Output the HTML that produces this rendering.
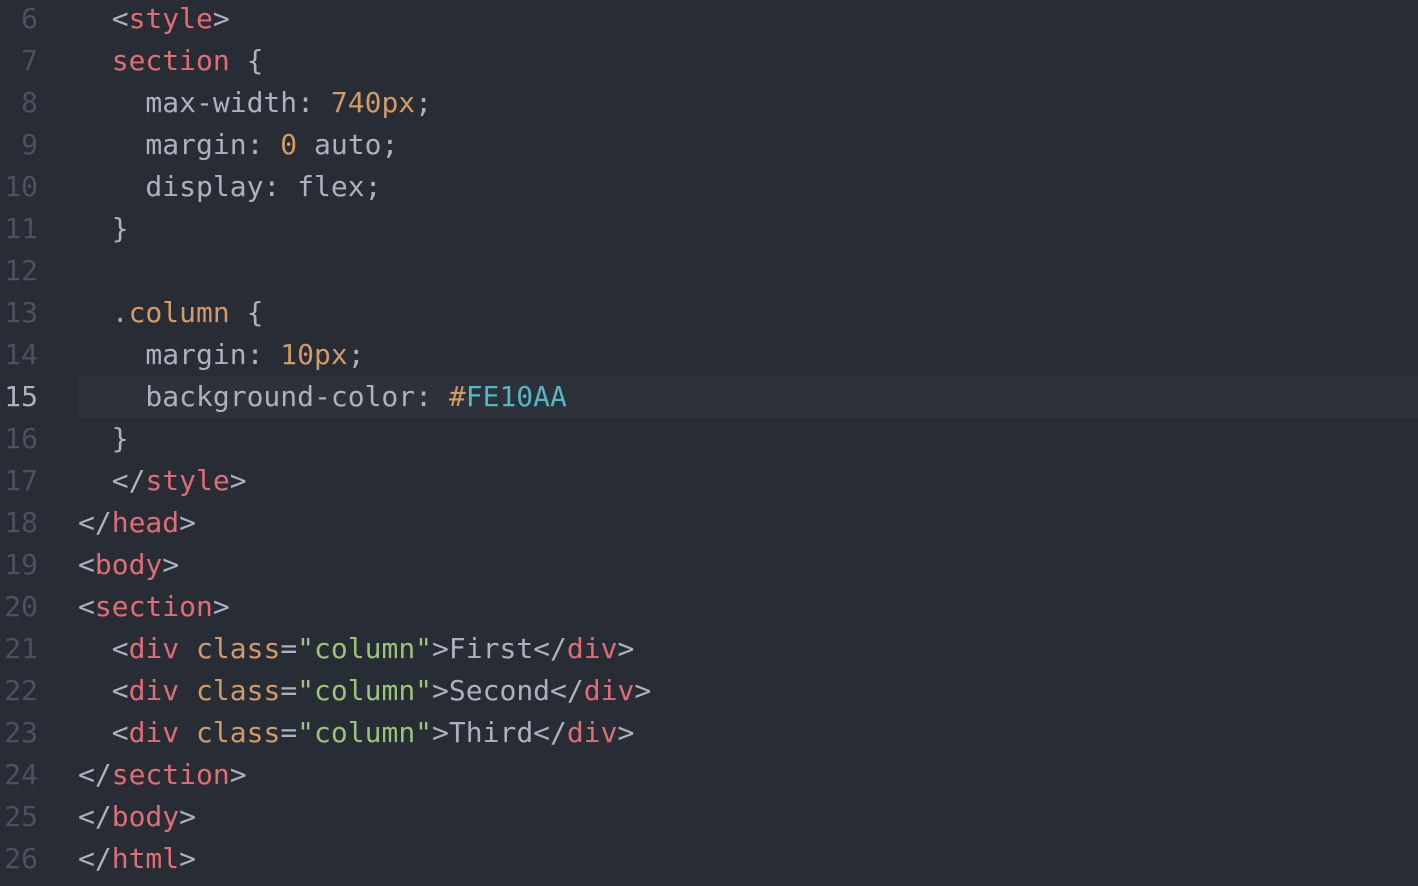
<!DOCTYPE html>
<html><head><style>
html,body{margin:0;padding:0;background:#282c34;width:1418px;height:886px;overflow:hidden}
.ed{position:absolute;top:-2px;left:0;right:0;font-family:"DejaVu Sans Mono","Liberation Mono",monospace;font-size:28px;color:#abb2bf}
.l{height:42px;line-height:42px;position:relative;white-space:pre}
.n{position:absolute;left:0;width:38px;text-align:right;color:#495162}
.c{position:absolute;left:78px}
.hl{background:#2c313a;margin-left:78px}
.hl .c{left:0}
.hl .n{left:-78px;color:#abb2bf}
.r{color:#e06c75}.o{color:#d19a66}.g{color:#98c379}.y{color:#56b6c2}
</style></head><body><div class="ed">
<div class="l"><span class="n">6</span><span class="c">  &lt;<span class="r">style</span>&gt;</span></div>
<div class="l"><span class="n">7</span><span class="c">  <span class="r">section</span> {</span></div>
<div class="l"><span class="n">8</span><span class="c">    max-width: <span class="o">740px</span>;</span></div>
<div class="l"><span class="n">9</span><span class="c">    margin: <span class="o">0</span> auto;</span></div>
<div class="l"><span class="n">10</span><span class="c">    display: flex;</span></div>
<div class="l"><span class="n">11</span><span class="c">  }</span></div>
<div class="l"><span class="n">12</span><span class="c"></span></div>
<div class="l"><span class="n">13</span><span class="c">  <span class="o">.column</span> {</span></div>
<div class="l"><span class="n">14</span><span class="c">    margin: <span class="o">10px</span>;</span></div>
<div class="l hl"><span class="n">15</span><span class="c">    background-color: <span class="o">#</span><span class="y">FE10AA</span></span></div>
<div class="l"><span class="n">16</span><span class="c">  }</span></div>
<div class="l"><span class="n">17</span><span class="c">  &lt;/<span class="r">style</span>&gt;</span></div>
<div class="l"><span class="n">18</span><span class="c">&lt;/<span class="r">head</span>&gt;</span></div>
<div class="l"><span class="n">19</span><span class="c">&lt;<span class="r">body</span>&gt;</span></div>
<div class="l"><span class="n">20</span><span class="c">&lt;<span class="r">section</span>&gt;</span></div>
<div class="l"><span class="n">21</span><span class="c">  &lt;<span class="r">div</span> <span class="o">class</span>=<span class="g">"column"</span>&gt;First&lt;/<span class="r">div</span>&gt;</span></div>
<div class="l"><span class="n">22</span><span class="c">  &lt;<span class="r">div</span> <span class="o">class</span>=<span class="g">"column"</span>&gt;Second&lt;/<span class="r">div</span>&gt;</span></div>
<div class="l"><span class="n">23</span><span class="c">  &lt;<span class="r">div</span> <span class="o">class</span>=<span class="g">"column"</span>&gt;Third&lt;/<span class="r">div</span>&gt;</span></div>
<div class="l"><span class="n">24</span><span class="c">&lt;/<span class="r">section</span>&gt;</span></div>
<div class="l"><span class="n">25</span><span class="c">&lt;/<span class="r">body</span>&gt;</span></div>
<div class="l"><span class="n">26</span><span class="c">&lt;/<span class="r">html</span>&gt;</span></div>
</div></body></html>
